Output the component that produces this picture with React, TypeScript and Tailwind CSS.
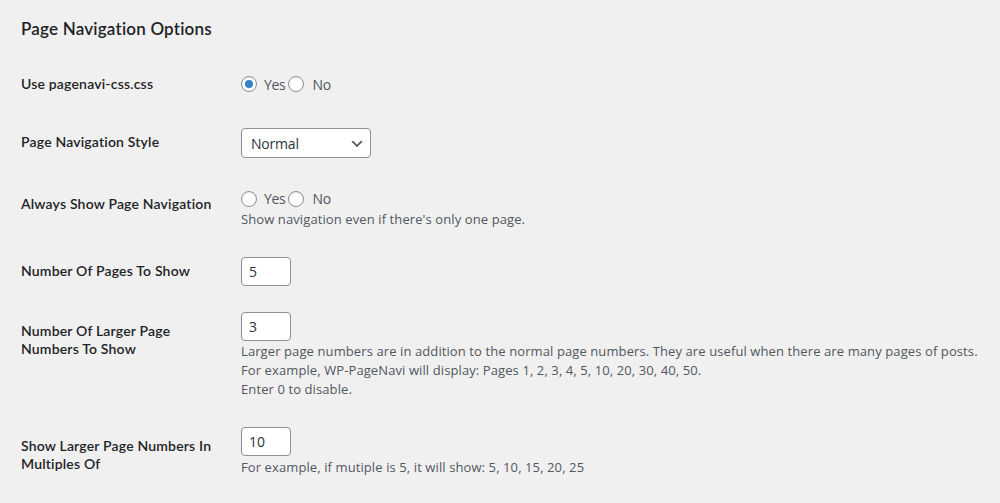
import React from "react";

const FONT = { fontFamily: '"Open Sans", "Noto Sans", Arial, sans-serif' };
const LABEL_FONT = { fontFamily: 'Lato, "Open Sans", Arial, sans-serif' };

function Radio({ checked }: { checked?: boolean }) {
  return (
    <span className="flex h-4 w-4 shrink-0 items-center justify-center rounded-full border border-[#8c8f94] bg-white shadow-[inset_0_1px_2px_rgba(0,0,0,0.1)]">
      {checked ? <span className="h-2 w-2 rounded-full bg-[#3582c4]" /> : null}
    </span>
  );
}

function YesNo({ yes }: { yes?: boolean }) {
  return (
    <div className="flex items-center text-[14px] tracking-[-0.3px] text-[#50575e]">
      <Radio checked={yes} />
      <span className="ml-[7px]">Yes</span>
      <span className="ml-[3px]">
        <Radio />
      </span>
      <span className="ml-[8px]">No</span>
    </div>
  );
}

function TextBox({ value }: { value: string }) {
  return (
    <div className="flex h-[29px] w-[50px] items-center rounded-[4px] border border-[#8c8f94] bg-white px-[7px] text-[14px] text-[#2c3338]">
      {value}
    </div>
  );
}

function Desc({ children }: { children: React.ReactNode }) {
  return <p className="whitespace-nowrap text-[13px] leading-[19px] tracking-[0.1px] text-[#50575e]">{children}</p>;
}

function Label({ children, pt }: { children: React.ReactNode; pt: string }) {
  return (
    <div
      className={`w-[220px] shrink-0 whitespace-nowrap pr-[20px] text-[14px] font-semibold leading-[18px] tracking-[0.18px] text-[#1d2327] ${pt}`}
      style={LABEL_FONT}
    >
      {children}
    </div>
  );
}

export default function App() {
  return (
    <div className="min-h-[503px] w-full bg-[#f0f0f1] pl-[21px]" style={FONT}>
      <div className="h-[55px] pt-[17px]">
        <h2 className="text-[17px] font-semibold leading-[24px] tracking-[0.2px] text-[#1d2327]" style={LABEL_FONT}>
          Page Navigation Options
        </h2>
      </div>

      {/* Row 1 */}
      <div className="flex h-[58px]">
        <Label pt="pt-[20px]">Use pagenavi-css.css</Label>
        <div className="pt-[20px]">
          <div className="flex h-[18px] items-center">
            <YesNo yes />
          </div>
        </div>
      </div>

      {/* Row 2 */}
      <div className="flex h-[60px]">
        <Label pt="pt-[20px]">Page Navigation Style</Label>
        <div className="pt-[15px]">
          <div className="relative flex h-[30px] w-[130px] items-center rounded-[4px] border border-[#8c8f94] bg-white pl-[9px] text-[14px] tracking-[-0.2px] text-[#2c3338]">
            Normal
            <svg className="absolute right-[5px] top-[7px] h-4 w-4" viewBox="0 0 20 20" aria-hidden="true">
              <path d="M5 6l5 5 5-5 2 1-7 7-7-7 2-1z" fill="#555" />
            </svg>
          </div>
        </div>
      </div>

      {/* Row 3 */}
      <div className="flex h-[68px]">
        <Label pt="pt-[22px]">Always Show Page Navigation</Label>
        <div className="pt-[15px]">
          <div className="flex h-[21px] items-center">
            <YesNo />
          </div>
          <div className="mt-[1px]">
            <Desc>Show navigation even if there's only one page.</Desc>
          </div>
        </div>
      </div>

      {/* Row 4 */}
      <div className="flex h-[56px]">
        <Label pt="pt-[21px]">Number Of Pages To Show</Label>
        <div className="pt-[16px]">
          <TextBox value="5" />
        </div>
      </div>

      {/* Row 5 */}
      <div className="flex h-[115px]">
        <Label pt="pt-[25px]">
          Number Of Larger Page
          <br />
          Numbers To Show
        </Label>
        <div className="pt-[15px]">
          <TextBox value="3" />
          <div className="mt-[1px]">
            <Desc>
              Larger page numbers are in addition to the normal page numbers. They are useful when there are many
              pages of posts.
              <br />
              For example, WP-PageNavi will display: Pages 1, 2, 3, 4, 5, 10, 20, 30, 40, 50.
              <br />
              Enter 0 to disable.
            </Desc>
          </div>
        </div>
      </div>

      {/* Row 6 */}
      <div className="flex h-[91px]">
        <Label pt="pt-[25px]">
          Show Larger Page Numbers In
          <br />
          Multiples Of
        </Label>
        <div className="pt-[15px]">
          <TextBox value="10" />
          <div className="mt-[2px]">
            <Desc>For example, if mutiple is 5, it will show: 5, 10, 15, 20, 25</Desc>
          </div>
        </div>
      </div>
    </div>
  );
}
